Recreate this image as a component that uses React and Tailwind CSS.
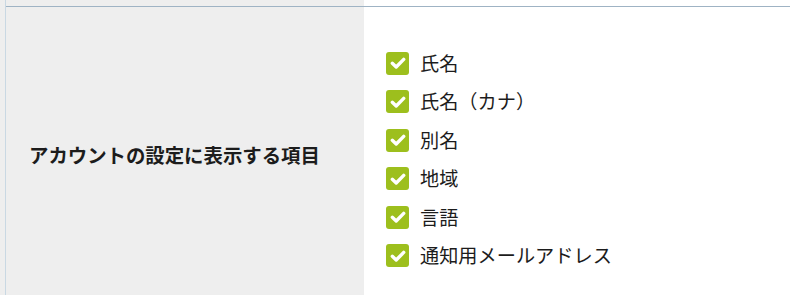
const items = ["氏名", "氏名（カナ）", "別名", "地域", "言語", "通知用メールアドレス"];

function CheckBox() {
  return (
    <span className="flex h-[23px] w-[23px] shrink-0 items-center justify-center rounded-[3px] bg-[#9dbf1d]">
      <svg width="16" height="16" viewBox="0 0 16 16">
        <path d="M2.3 8.3 L6.2 12 L13.7 4.4" fill="none" stroke="#fff" strokeWidth="3.4" strokeLinecap="round" strokeLinejoin="round" />
      </svg>
    </span>
  );
}

export default function App() {
  return (
    <div
      className="flex h-[295px] w-[790px] overflow-hidden bg-white text-[#1c1c1c]"
      style={{ fontFamily: '"Noto Sans CJK JP", "Noto Sans", sans-serif' }}
    >
      <div className="w-[5px] shrink-0 bg-[#eeeeee]" />
      <div className="w-px shrink-0 bg-[#c9d8e3]" />
      <div className="flex flex-1 flex-col">
        <div className="flex h-[6px] shrink-0">
          <div className="w-[358px] bg-[#eeeeee]" />
          <div className="flex-1" />
        </div>
        <div className="h-px shrink-0 bg-[#9fb3c4]" />
        <div className="flex min-h-[296px]">
          <div className="flex w-[358px] shrink-0 items-center bg-[#eeeeee] pl-[23px]">
            <span className="text-[19.4px] font-bold leading-none">アカウントの設定に表示する項目</span>
          </div>
          <ul className="flex flex-col pl-[22px] pt-[37px]">
            {items.map((label) => (
              <li key={label} className="flex h-[38.5px] items-center gap-[11px]">
                <CheckBox />
                <span className="text-[19.2px] leading-none">{label}</span>
              </li>
            ))}
          </ul>
        </div>
      </div>
    </div>
  );
}
